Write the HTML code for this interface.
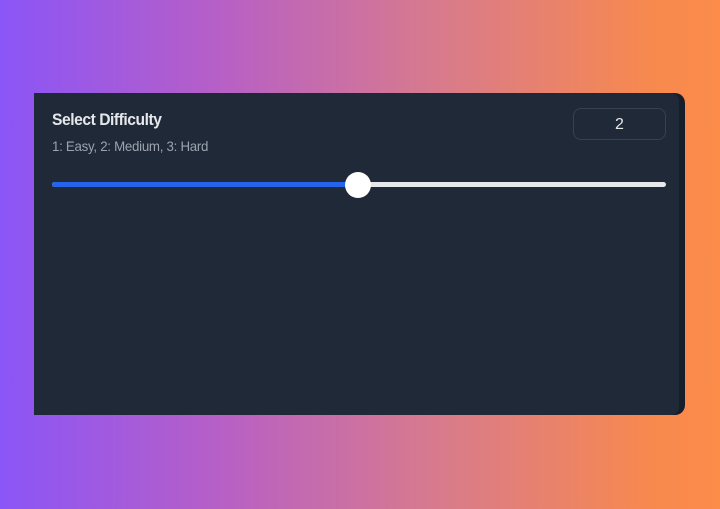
<!DOCTYPE html>
<html><head><style>
html,body{margin:0;padding:0}
body{width:720px;height:509px;background:linear-gradient(90deg,#8b55f7 0%,#b65fc7 30%,#d77a8e 60%,#f7894f 90%,#fb8c4a 100%);position:relative;overflow:hidden;font-family:"Liberation Sans",sans-serif}
.card{position:absolute;left:34px;top:93px;width:651px;height:322px;background:#161e2b;border-radius:0 10px 10px 0}
.inner{position:absolute;left:0;top:0;width:645px;height:322px;background:#1f2937;border-radius:0 8px 8px 0}
.t{position:absolute;left:18px;top:17px;color:#e5e7eb;font-size:17px;letter-spacing:-0.5px;font-weight:bold;transform:scaleX(0.92);transform-origin:left}
.s{position:absolute;left:18px;top:45px;color:#9ca3af;font-size:14px;letter-spacing:-0.3px;transform:scaleX(0.95);transform-origin:left}
.box{position:absolute;left:539px;top:15px;width:91px;height:30px;border:1px solid #374151;border-radius:8px;color:#e5e7eb;font-size:16px;text-align:center;line-height:31px}
.tr{position:absolute;left:18px;top:89px;width:614px;height:5px;background:#e5e7eb;border-radius:3px}
.fill{position:absolute;left:18px;top:89px;width:307px;height:5px;background:#2563eb;border-radius:3px}
.th{position:absolute;left:311px;top:79px;width:26px;height:26px;border-radius:50%;background:#fff}
</style></head><body>
<div class="card"><div class="inner">
<div class="t">Select Difficulty</div>
<div class="s">1: Easy, 2: Medium, 3: Hard</div>
<div class="box">2</div>
<div class="tr"></div><div class="fill"></div><div class="th"></div>
</div></div>
</body></html>
